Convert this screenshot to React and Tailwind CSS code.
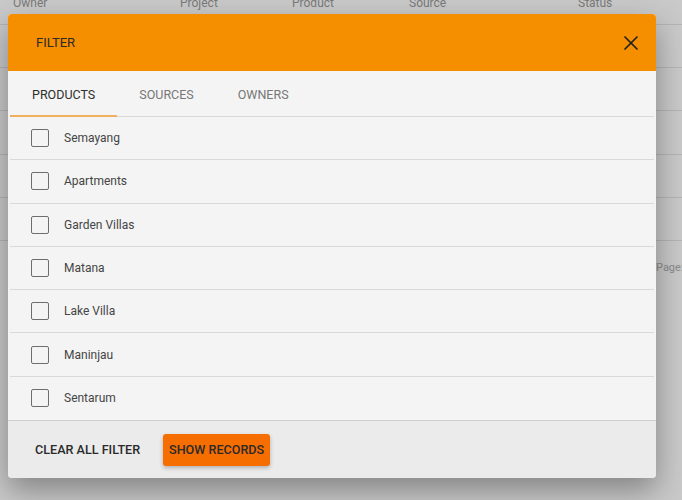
import React, { useState } from 'react';
import { X } from 'lucide-react';

const products = ['Semayang', 'Apartments', 'Garden Villas', 'Matana', 'Lake Villa', 'Maninjau', 'Sentarum'];
const tabs = ['Products', 'Sources', 'Owners'];
const columns = [
  { label: 'Owner', cls: 'w-[180px] pl-[13px]' },
  { label: 'Project', cls: 'w-[112px]' },
  { label: 'Product', cls: 'w-[117px]' },
  { label: 'Source', cls: 'w-[169px]' },
  { label: 'Status', cls: 'flex-1' },
];

const Backdrop = () => (
  <div className="flex flex-col text-[12px] text-[#7a7a7a]">
    <div className="flex h-[31px] -mt-[6px] border-b border-[#b4b4b4]">
      {columns.map((c) => (
        <div key={c.label} className={c.cls}>{c.label}</div>
      ))}
    </div>
    {[0, 1, 2, 3, 4].map((i) => (
      <div key={i} className="h-[43.2px] border-b border-[#b4b4b4]" />
    ))}
    <div className="flex justify-end pt-[19px] text-[11px] text-[#8a8a8a]">
      <span className="w-[26px] overflow-hidden whitespace-nowrap">Page:</span>
    </div>
  </div>
);

const Checkbox = ({ checked, onChange }) => (
  <button
    onClick={onChange}
    className="w-[18px] h-[18px] rounded-[2px] border-[1.5px] border-[#6e6e6e] flex items-center justify-center"
  >
    {checked && <span className="w-[10px] h-[10px] bg-[#f68f00]" />}
  </button>
);

export default function App() {
  const [tab, setTab] = useState(0);
  const [checked, setChecked] = useState({});

  return (
    <div
      className="relative w-[682px] h-[500px] overflow-hidden bg-[#c9c9c9]"
      style={{ fontFamily: 'Roboto, "Liberation Sans", sans-serif' }}
    >
      <Backdrop />

      <div className="absolute left-[8px] top-[14px] w-[648px] rounded-[4px] overflow-hidden bg-[#f4f4f4] shadow-[0_12px_30px_rgba(0,0,0,0.35)]">
        <div className="h-[57px] bg-[#f68f00] flex items-center justify-between pl-[28px] pr-[13px]">
          <span className="text-[13px] text-[#2a2a2a]">FILTER</span>
          <X size={24} strokeWidth={1.75} className="text-[#222]" />
        </div>

        <div className="px-[2px]">
          <div className="flex h-[46px] border-b border-[#d9d9d9]">
            {tabs.map((t, i) => (
              <button
                key={t}
                onClick={() => setTab(i)}
                className={`relative px-[22px] pt-[3px] text-[12.5px] uppercase ${
                  tab === i ? 'text-[#2e2e2e]' : 'text-[#777]'
                }`}
              >
                {t}
                {tab === i && <span className="absolute left-0 right-0 -bottom-[1px] h-[2px] bg-[#f0b060]" />}
              </button>
            ))}
          </div>

          {products.map((p) => (
            <div key={p} className="h-[43.3px] flex items-center border-b border-[#d9d9d9] last:border-b-0">
              <div className="pl-[21px] pr-[15px] flex items-center">
                <Checkbox
                  checked={!!checked[p]}
                  onChange={() => setChecked({ ...checked, [p]: !checked[p] })}
                />
              </div>
              <span className="text-[12px] text-[#444]">{p}</span>
            </div>
          ))}
        </div>

        <div className="h-[58px] bg-[#ebebeb] border-t border-[#cfcfcf] flex items-center pl-[19px] gap-[15px]">
          <button className="px-[8px] h-[32px] pt-[1px] text-[12.6px] font-medium text-[#2a2a2a]">CLEAR ALL FILTER</button>
          <button className="h-[32px] w-[107px] pt-[1px] rounded-[3px] bg-[#f66d00] text-[12.6px] font-medium text-[#2a2a2a] shadow-[0_2px_4px_rgba(0,0,0,0.25)]">
            SHOW RECORDS
          </button>
        </div>
      </div>
    </div>
  );
}
